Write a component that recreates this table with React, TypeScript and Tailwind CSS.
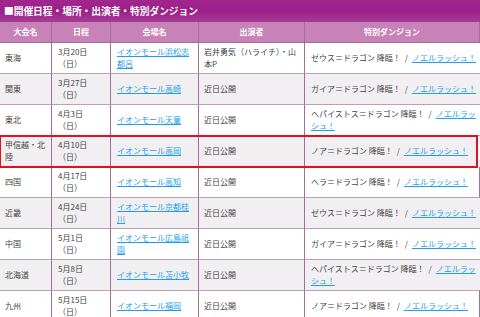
import React from "react";

type Row = {
  region: React.ReactNode;
  date: string;
  venue: React.ReactNode;
  cast: React.ReactNode;
  dragon: string;
  rush: React.ReactNode;
  highlight?: boolean;
};

const rows: Row[] = [
  {
    region: "東海",
    date: "3月20日",
    venue: (
      <>
        イオンモール浜松志
        <br />
        都呂
      </>
    ),
    cast: (
      <>
        岩井勇気（ハライチ）・山
        <br />
        本P
      </>
    ),
    dragon: "ゼウス＝ドラゴン",
    rush: "ノエルラッシュ！",
  },
  {
    region: "関東",
    date: "3月27日",
    venue: "イオンモール高崎",
    cast: "近日公開",
    dragon: "ガイア＝ドラゴン",
    rush: "ノエルラッシュ！",
  },
  {
    region: "東北",
    date: "4月3日",
    venue: "イオンモール天童",
    cast: "近日公開",
    dragon: "ヘパイストス＝ドラゴン",
    rush: (
      <>
        ノエルラッ
        <br />
        シュ！
      </>
    ),
  },
  {
    region: (
      <>
        甲信越・北
        <br />
        陸
      </>
    ),
    date: "4月10日",
    venue: "イオンモール高岡",
    cast: "近日公開",
    dragon: "ノア＝ドラゴン",
    rush: "ノエルラッシュ！",
    highlight: true,
  },
  {
    region: "四国",
    date: "4月17日",
    venue: "イオンモール高知",
    cast: "近日公開",
    dragon: "ヘラ＝ドラゴン",
    rush: "ノエルラッシュ！",
  },
  {
    region: "近畿",
    date: "4月24日",
    venue: (
      <>
        イオンモール京都桂
        <br />
        川
      </>
    ),
    cast: "近日公開",
    dragon: "ゼウス＝ドラゴン",
    rush: "ノエルラッシュ！",
  },
  {
    region: "中国",
    date: "5月1日",
    venue: (
      <>
        イオンモール広島祇
        <br />
        園
      </>
    ),
    cast: "近日公開",
    dragon: "ガイア＝ドラゴン",
    rush: "ノエルラッシュ！",
  },
  {
    region: "北海道",
    date: "5月8日",
    venue: "イオンモール苫小牧",
    cast: "近日公開",
    dragon: "ヘパイストス＝ドラゴン",
    rush: (
      <>
        ノエルラッ
        <br />
        シュ！
      </>
    ),
  },
  {
    region: "九州",
    date: "5月15日",
    venue: "イオンモール福岡",
    cast: "近日公開",
    dragon: "ノア＝ドラゴン",
    rush: "ノエルラッシュ！",
  },
];

const cols = "grid grid-cols-[52px_59px_88px_106px_1fr]";
const cell =
  "flex items-center whitespace-nowrap border-r border-b border-r-[#a0709a] border-b-[#b9a2b5] px-[5px] h-[31px]";
const link = "text-[#1e9fe8] underline underline-offset-1";

export default function App() {
  return (
    <div
      className="w-[480px] h-[317px] overflow-hidden bg-white text-[#444] text-[8px] leading-[12px]"
      style={{ fontFamily: '"Noto Sans CJK JP", "Noto Sans", sans-serif' }}
    >
      <div className="h-[22px] flex items-center pl-[4px] bg-gradient-to-b from-[#a3268f] via-[#9c1e89] to-[#a63c96] text-white text-[9.8px] font-bold tracking-[-0.1px]">
        ■開催日程・場所・出演者・特別ダンジョン
      </div>
      <div className={`${cols} h-[21px] bg-[#c783b8] text-white font-bold text-[8px]`}>
        {["大会名", "日程", "会場名", "出演者", "特別ダンジョン"].map((h) => (
          <div key={h} className="flex items-center justify-center border-r border-b border-[#a0709a]">
            {h}
          </div>
        ))}
      </div>
      {rows.map((r, i) => (
        <div
          key={i}
          className={`${cols} ${i % 2 === 1 ? "bg-[#f1eff1]" : "bg-white"} ${
            r.highlight ? "outline-2 outline-[#e60f1e] -outline-offset-1 relative mr-[3px]" : ""
          }`}
        >
          <div className={cell}>{r.region}</div>
          <div className={`${cell} pl-[6px]`}>
            <div>
              {r.date}
              <br />
              （日）
            </div>
          </div>
          <div className={`${cell} pl-[6px]`}>
            <span className={link}>{r.venue}</span>
          </div>
          <div className={cell}>{r.cast}</div>
          <div className={`${cell} pl-[6px]`}>
            <div>
              {r.dragon} 降臨！
              <span className="ml-[4px] mr-[4px]">/</span>
              <span className={link}>{r.rush}</span>
            </div>
          </div>
        </div>
      ))}
    </div>
  );
}
